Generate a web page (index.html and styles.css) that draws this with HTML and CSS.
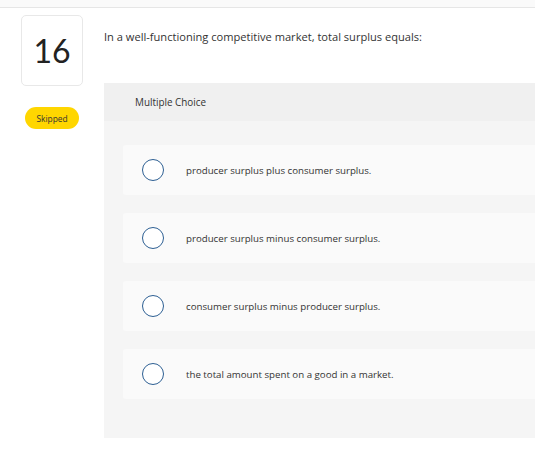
FILE: index.html
```html
<!DOCTYPE html>
<html>
<head>
<meta charset="utf-8">
<link rel="stylesheet" href="styles.css">
</head>
<body>
<div class="topbar"></div>
<div class="main">
  <div class="side">
    <div class="qnum">16</div>
    <div class="badge">Skipped</div>
  </div>
  <div class="content">
    <p class="question">In a well-functioning competitive market, total surplus equals:</p>
    <div class="panel">
      <div class="panel-head">Multiple Choice</div>
      <div class="panel-body">
        <div class="option"><span class="radio"></span><span class="opt-text">producer surplus plus consumer surplus.</span></div>
        <div class="option"><span class="radio"></span><span class="opt-text">producer surplus minus consumer surplus.</span></div>
        <div class="option"><span class="radio"></span><span class="opt-text">consumer surplus minus producer surplus.</span></div>
        <div class="option"><span class="radio"></span><span class="opt-text">the total amount spent on a good in a market.</span></div>
      </div>
    </div>
  </div>
</div>
</body>
</html>
```

FILE: styles.css
```css
html, body {
  margin: 0;
  padding: 0;
  background: #ffffff;
  overflow: hidden;
  font-family: "Open Sans", "Lato", sans-serif;
  color: #333333;
}
.topbar {
  height: 7px;
  background: #fafafa;
  border-bottom: 1px solid #e6e6e6;
}
.main {
  display: flex;
  padding: 7px 0 0 21px;
  gap: 21px;
}
.side {
  display: flex;
  flex-direction: column;
  align-items: center;
  width: 62px;
  flex: none;
}
.qnum {
  box-sizing: border-box;
  width: 62px;
  height: 71px;
  border: 1px solid #e8e8e8;
  border-radius: 5px;
  display: flex;
  align-items: center;
  justify-content: center;
  font-family: "Lato", sans-serif;
  font-size: 32px;
  color: #222222;
}
.badge {
  margin-top: 21px;
  width: 54px;
  height: 22px;
  border-radius: 11px;
  background: #ffd600;
  display: flex;
  align-items: center;
  justify-content: center;
  font-size: 8.4px;
  color: #333333;
}
.content {
  flex: 1;
  min-width: 0;
}
.question {
  margin: 0;
  padding-top: 14px;
  line-height: 16px;
  font-size: 11.1px;
  height: 45px;
  box-sizing: border-box;
  white-space: nowrap;
}
.panel {
  margin-top: 23px;
  background: #f5f5f5;
}
.panel-head {
  height: 38px;
  background: #f0f0f0;
  display: flex;
  align-items: center;
  padding-left: 31px;
  font-size: 9.9px;
}
.panel-body {
  display: flex;
  flex-direction: column;
  gap: 18px;
  padding: 24px 0 39px 19px;
}
.option {
  height: 50px;
  background: #fafafa;
  border-radius: 3px 0 0 3px;
  display: flex;
  align-items: center;
  padding-left: 19px;
  gap: 22px;
  font-size: 9.7px;
}
.radio {
  box-sizing: border-box;
  width: 22px;
  height: 22px;
  border: 1.5px solid #2d5f93;
  border-radius: 50%;
  background: #ffffff;
  flex: none;
}
```
